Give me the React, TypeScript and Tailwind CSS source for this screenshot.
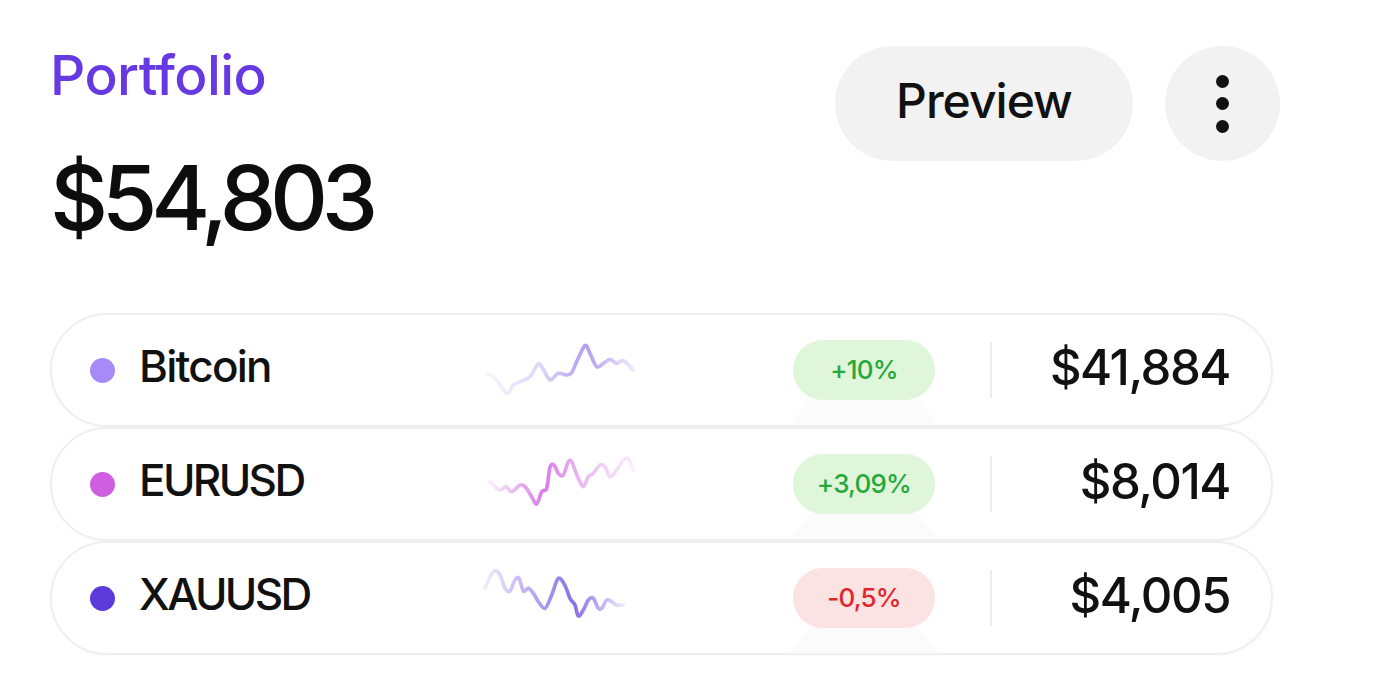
import React from "react";

type Pt = [number, number];

function smooth(pts: Pt[]): string {
  let d = `M${pts[0][0]},${pts[0][1]}`;
  for (let i = 0; i < pts.length - 1; i++) {
    const p0 = pts[i - 1] || pts[i];
    const p1 = pts[i];
    const p2 = pts[i + 1];
    const p3 = pts[i + 2] || p2;
    const c1x = p1[0] + (p2[0] - p0[0]) / 6;
    const c1y = p1[1] + (p2[1] - p0[1]) / 6;
    const c2x = p2[0] - (p3[0] - p1[0]) / 6;
    const c2y = p2[1] - (p3[1] - p1[1]) / 6;
    d += ` C${c1x},${c1y} ${c2x},${c2y} ${p2[0]},${p2[1]}`;
  }
  return d;
}

const btcPts: Pt[] = [
  [50, 130], [80, 150], [110, 190], [130, 165], [150, 155], [180, 140], [205, 102],
  [222, 122], [240, 150], [265, 130], [290, 135], [305, 128], [320, 95], [345, 47],
  [360, 70], [380, 110], [400, 100], [420, 88], [440, 100], [460, 92], [490, 120],
];
const eurPts: Pt[] = [
  [60, 125], [88, 150], [108, 140], [125, 155], [150, 135], [165, 140], [185, 170],
  [200, 192], [215, 155], [230, 145], [240, 82], [252, 75], [265, 100], [280, 105],
  [295, 65], [305, 65], [315, 90], [325, 115], [340, 140], [355, 110], [370, 100],
  [390, 75], [405, 80], [420, 110], [440, 90], [460, 60], [475, 55], [490, 90],
];
const xauPts: Pt[] = [
  [45, 100], [60, 65], [75, 47], [90, 60], [105, 100], [120, 108], [135, 75], [147, 70],
  [160, 108], [175, 100], [190, 115], [205, 140], [225, 160], [245, 120], [265, 70],
  [285, 92], [300, 130], [315, 150], [325, 183], [340, 165], [355, 135], [370, 130],
  [385, 160], [397, 158], [410, 135], [425, 140], [440, 150], [460, 150],
];

type Row = {
  name: string;
  nameTrack: string;
  dot: string;
  pts: Pt[];
  color: string;
  stops: [number, number][];
  vb: string;
  change: string;
  up: boolean;
  value: string;
  id: string;
};

const rows: Row[] = [
  {
    id: "btc",
    name: "Bitcoin",
    nameTrack: "tracking-[-0.04em]",
    dot: "bg-[#a68af8]",
    pts: btcPts,
    color: "#a88cf0",
    stops: [[0, 0.08], [0.35, 0.35], [0.68, 0.85], [1, 0.2]],
    vb: "0 0 540 240",
    change: "+10%",
    up: true,
    value: "$41,884",
  },
  {
    id: "eur",
    name: "EURUSD",
    nameTrack: "tracking-[-0.06em]",
    dot: "bg-[#cf5fe0]",
    pts: eurPts,
    color: "#d575e6",
    stops: [[0, 0.12], [0.38, 0.95], [0.6, 0.55], [1, 0.12]],
    vb: "0 12 540 240",
    change: "+3,09%",
    up: true,
    value: "$8,014",
  },
  {
    id: "xau",
    name: "XAUUSD",
    nameTrack: "tracking-[-0.06em]",
    dot: "bg-[#5a3ad9]",
    pts: xauPts,
    color: "#8466e6",
    stops: [[0, 0.12], [0.45, 0.7], [0.65, 0.95], [1, 0.15]],
    vb: "0 9 540 240",
    change: "-0,5%",
    up: false,
    value: "$4,005",
  },
];

function Spark({ row }: { row: Row }) {
  const gid = `g-${row.id}`;
  return (
    <svg width="180" height="80" viewBox={row.vb} className="shrink-0 blur-[0.5px]">
      <defs>
        <linearGradient id={gid} x1="0" y1="0" x2="1" y2="0">
          {row.stops.map(([o, a], i) => (
            <stop key={i} offset={o} stopColor={row.color} stopOpacity={a} />
          ))}
        </linearGradient>
      </defs>
      <path
        d={smooth(row.pts)}
        fill="none"
        stroke={`url(#${gid})`}
        strokeWidth={11}
        strokeLinecap="round"
        strokeLinejoin="round"
      />
    </svg>
  );
}

function AssetRow({ row }: { row: Row }) {
  return (
    <div className="relative flex h-[114px] w-[1223px] items-center rounded-full border-2 border-[#efefef] bg-white pl-[38px] pr-[41px] shadow-[0_1px_3px_rgba(0,0,0,0.03)]">
      <span className={`h-[25px] w-[25px] shrink-0 rounded-full ${row.dot}`} />
      <span
        className={`ml-[24px] w-[331px] shrink-0 pb-[8px] text-[44px] font-medium leading-none text-[#111111] ${row.nameTrack}`}
      >
        {row.name}
      </span>
      <Spark row={row} />
      <div className="relative ml-[143px] shrink-0">
        <div
          className={`flex h-[60px] w-[142px] items-center justify-center rounded-full text-[26px] font-medium leading-none tracking-[-0.03em] ${
            row.up ? "bg-[#dff6db] text-[#27a83a]" : "bg-[#fbe3e3] text-[#e2252c]"
          }`}
        >
          {row.change}
        </div>
        <div className="absolute left-[-4px] top-[60px] h-[25px] w-[150px] bg-[#fbfbfb] [clip-path:polygon(14%_0,86%_0,100%_100%,0_100%)]" />
      </div>
      <div className="ml-[55px] h-[56px] w-[2px] shrink-0 bg-[#ececec]" />
      <div className="flex-1 pb-[6px] text-right text-[49px] font-medium leading-none tracking-[-0.03em] text-[#111111]">
        {row.value}
      </div>
    </div>
  );
}

export default function App() {
  return (
    <div className="min-h-screen w-full bg-white pl-[50px] font-[Inter,sans-serif] text-[#111111]">
      <div className="flex w-[1230px] items-start justify-between pt-[46px]">
        <div className="flex flex-col pt-[2px]">
          <div className="text-[55px] font-medium leading-none tracking-[-0.01em] text-[#6639e3]">
            Portfolio
          </div>
          <div className="mt-[50px] text-[90px] font-medium leading-none tracking-[-0.07em] text-[#0d0d0d]">
            $54,803
          </div>
        </div>
        <div className="flex items-center gap-[32px]">
          <button className="flex h-[115px] w-[298px] items-center justify-center rounded-full bg-[#f2f2f2] pb-[6px] text-[48px] font-medium leading-none tracking-[-0.02em] text-[#111111]">
            Preview
          </button>
          <button className="flex h-[115px] w-[115px] flex-col items-center justify-center gap-[9.5px] rounded-full bg-[#f2f2f2]">
            <span className="h-[13px] w-[13px] rounded-full bg-[#111111]" />
            <span className="h-[13px] w-[13px] rounded-full bg-[#111111]" />
            <span className="h-[13px] w-[13px] rounded-full bg-[#111111]" />
          </button>
        </div>
      </div>
      <div className="mt-[70px] flex flex-col">
        {rows.map((r) => (
          <AssetRow key={r.id} row={r} />
        ))}
      </div>
    </div>
  );
}
